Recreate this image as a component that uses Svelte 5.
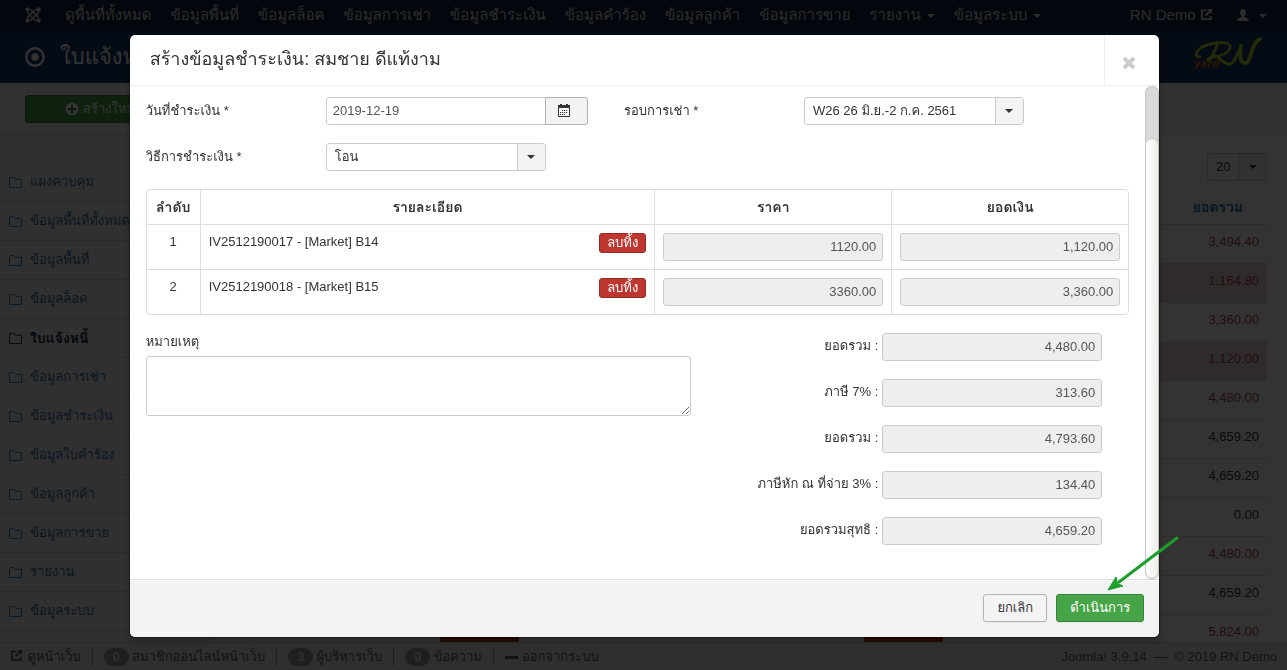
<script lang="ts">
  const navItems = [
    'ดูพื้นที่ทั้งหมด',
    'ข้อมูลพื้นที่',
    'ข้อมูลล็อค',
    'ข้อมูลการเช่า',
    'ข้อมูลชำระเงิน',
    'ข้อมูลคำร้อง',
    'ข้อมูลลูกค้า',
    'ข้อมูลการขาย'
  ];
  const navMenus = ['รายงาน', 'ข้อมูลระบบ'];

  const sideItems = [
    'แผงควบคุม',
    'ข้อมูลพื้นที่ทั้งหมด',
    'ข้อมูลพื้นที่',
    'ข้อมูลล็อค',
    'ใบแจ้งหนี้',
    'ข้อมูลการเช่า',
    'ข้อมูลชำระเงิน',
    'ข้อมูลใบคำร้อง',
    'ข้อมูลลูกค้า',
    'ข้อมูลการขาย',
    'รายงาน',
    'ข้อมูลระบบ'
  ];
  const activeSide = 'ใบแจ้งหนี้';

  const bills = [
    { total: '3,494.40', due: true },
    { total: '1,164.80', due: true, late: true },
    { total: '3,360.00', due: true },
    { total: '1,120.00', due: true, late: true },
    { total: '4,480.00', due: true },
    { total: '4,659.20' },
    { total: '4,659.20' },
    { total: '0.00' },
    { total: '4,480.00', due: true },
    { total: '4,659.20' },
    { total: '5,824.00', due: true }
  ];

  const status = [
    { count: 0, text: 'สมาชิกออนไลน์หน้าเว็บ' },
    { count: 3, text: 'ผู้บริหารเว็บ' },
    { count: 0, text: 'ข้อความ' }
  ];

  const totals = [
    { id: 'subtotal', label: 'ยอดรวม :', value: '4,480.00' },
    { id: 'vat', label: 'ภาษี 7% :', value: '313.60' },
    { id: 'total', label: 'ยอดรวม :', value: '4,793.60' },
    { id: 'withholding', label: 'ภาษีหัก ณ ที่จ่าย 3% :', value: '134.40' },
    { id: 'net', label: 'ยอดรวมสุทธิ :', value: '4,659.20' }
  ];

  let lines = $state([
    { name: 'IV2512190017 - [Market] B14', price: '1120.00', amount: '1,120.00' },
    { name: 'IV2512190018 - [Market] B15', price: '3360.00', amount: '3,360.00' }
  ]);
  let payDate = $state('2019-12-19');
  let note = $state('');
  let open = $state(true);

  function removeLine(index: number) {
    lines.splice(index, 1);
  }
</script>

{#snippet external()}
  <svg class="icon" viewBox="0 0 14 14" aria-hidden="true">
    <path d="M7 2.5H2v9.5h9.500V8.500" fill="none" stroke="currentColor" stroke-width="2" />
    <path d="M7.500 1H13v5.500L11 4.600 6.800 8.900 5.200 7.300 9.500 3z" fill="currentColor" />
  </svg>
{/snippet}

<div class="page">
  <nav class="navbar">
    <a class="brand" href="#home" aria-label="Joomla">
      <svg viewBox="0 0 18 18" aria-hidden="true">
        <g fill="none" stroke="currentColor" stroke-width="1.700">
          <path d="M3 3.500Q2.500 6 4 7.500L11.500 15Q13 16 15 15" />
          <path d="M14.500 3Q12 2.500 10.500 4L3 11.500Q2 13 3 15" />
          <path d="M15 14.500Q15.500 12 14 10.500L6.500 3Q5 2 3 3" />
          <path d="M3.500 15Q6 15.500 7.500 14L15 6.500Q16 5 15 3" />
        </g>
        <g fill="currentColor">
          <circle cx="2.500" cy="2.500" r="2.200" />
          <circle cx="15.500" cy="2.500" r="2.200" />
          <circle cx="2.500" cy="15.500" r="2.200" />
          <circle cx="15.500" cy="15.500" r="2.200" />
        </g>
      </svg>
    </a>
    <div class="nav-list">
      {#each navItems as item}
        <a href="#nav">{item}</a>
      {/each}
      {#each navMenus as item}
        <a href="#nav">{item}<span class="caret"></span></a>
      {/each}
    </div>
    <div class="nav-user">
      <a href="#site">RN Demo {@render external()}</a>
      <a href="#user" aria-label="User">
        <svg class="icon user" viewBox="0 0 12 12" aria-hidden="true">
          <path
            d="M6 0c2 0 3 1.500 3 3.300C9 5 8.200 6.300 7.400 7v1c2.500.500 4.100 1.500 4.600 4H0c.500-2.500 2.100-3.500 4.600-4V7C3.800 6.300 3 5 3 3.300 3 1.500 4 0 6 0z"
            fill="currentColor"
          />
        </svg>
        <span class="caret"></span>
      </a>
    </div>
  </nav>

  <header class="header">
    <svg class="record" viewBox="0 0 20 20" aria-hidden="true">
      <circle cx="10" cy="10" r="8.700" fill="none" stroke="currentColor" stroke-width="2.400" />
      <circle cx="10" cy="10" r="3.700" fill="currentColor" />
    </svg>
    <h1>ใบแจ้งหนี้</h1>
    <svg class="logo" viewBox="0 0 70 40" role="img" aria-label="RN yard">
      <g fill="none" stroke="#a4d42e" stroke-linecap="round" stroke-linejoin="round">
        <path d="M7 20C-1 20 4 9 20 6.500c14-2.500 20 1 16 6.500-3 4-9 6-13 6.500" stroke-width="2.800" />
        <path d="M24 8C22 14 19 20 15 23c4-1 5-5 8-4 4 2 8 9 14 8 5-1 8-13 11-17" stroke-width="3" />
        <path d="M48 9c-1 7-2 17 4 17 7 0 5-20 15-24" stroke-width="3.800" />
      </g>
      <text x="1" y="30" class="logo-text">yard</text>
    </svg>
  </header>

  <div class="subhead">
    <button class="btn success new" type="button">
      <svg viewBox="0 0 14 14" aria-hidden="true">
        <circle cx="7" cy="7" r="6.500" fill="#fff" />
        <path d="M7 3v8M3 7h8" stroke="#378137" stroke-width="2" />
      </svg>
      สร้างใหม่
    </button>
  </div>

  <div class="content">
    <ul class="sidebar">
      {#each sideItems as item}
        <li class:active={item === activeSide}>
          <a href="#side">
            <svg viewBox="0 0 14 12" aria-hidden="true">
              <path d="M.5 11.500V.5h4.500l2 2h6.500v9z" fill="none" stroke="currentColor" />
            </svg>
            {item}
          </a>
        </li>
      {/each}
    </ul>
    <main>
      <div class="select limit">
        <select aria-label="Limit"><option>20</option></select>
        <span class="arrow"><span class="caret"></span></span>
      </div>
      <table class="bills">
        <thead>
          <tr>
            <th class="check"></th>
            <th class="state"></th>
            <th class="state"></th>
            <th>ยอดรวม</th>
          </tr>
        </thead>
        <tbody>
          {#each bills as bill}
            <tr class:late={bill.late} class:due={bill.due}>
              <td class="check"><input type="checkbox" aria-label="Select bill" /></td>
              <td class="state"><span class="tag"></span></td>
              <td class="state"><span class="tag"></span></td>
              <td>{bill.total}</td>
            </tr>
          {/each}
        </tbody>
      </table>
    </main>
  </div>

  <footer class="status">
    <a href="#site">{@render external()} ดูหน้าเว็บ</a>
    {#each status as item}
      <span class="stat"><b class="badge">{item.count}</b>{item.text}</span>
    {/each}
    <a class="stat" href="#logout"><span class="minus"></span>ออกจากระบบ</a>
    <span class="copy">Joomla! 3.9.14 &nbsp;—&nbsp; © 2019 RN Demo</span>
  </footer>
</div>

{#if open}
  <div class="backdrop">
    <div class="modal" role="dialog" aria-modal="true" aria-labelledby="modal-title">
      <div class="modal-header">
        <h3 id="modal-title">สร้างข้อมูลชำระเงิน: สมชาย ดีแท้งาม</h3>
        <button class="close" type="button" aria-label="Close" onclick={() => (open = false)}>
          <svg viewBox="0 0 14 14" aria-hidden="true">
            <path d="M2 2l10 10M12 2L2 12" stroke="currentColor" stroke-width="4" />
          </svg>
        </button>
      </div>

      <div class="modal-scroll">
        <form class="modal-body" id="payment">
          <div class="fields">
            <div class="field">
              <label for="pay-date">วันที่ชำระเงิน *</label>
              <div class="date">
                <input id="pay-date" type="text" bind:value={payDate} />
                <button type="button" aria-label="Calendar">
                  <svg viewBox="0 0 12 13" aria-hidden="true">
                    <path d="M.5 2.500h11v10H.5z" fill="#fff" stroke="#333" />
                    <path d="M0 1h2V0h2v1h4V0h2v1h2v3H0z" fill="#333" />
                    <path
                      d="M4 6.500h6M2 8.500h8M2 10.500h6"
                      stroke="#333"
                      stroke-width="1.200"
                      stroke-dasharray="1.200 .8"
                    />
                  </svg>
                </button>
              </div>
            </div>
            <div class="field">
              <label for="period">รอบการเช่า *</label>
              <div class="select">
                <select id="period"><option>W26 26 มิ.ย.-2 ก.ค. 2561</option></select>
                <span class="arrow"><span class="caret"></span></span>
              </div>
            </div>
            <div class="field">
              <label for="method">วิธีการชำระเงิน *</label>
              <div class="select">
                <select id="method"><option>โอน</option></select>
                <span class="arrow"><span class="caret"></span></span>
              </div>
            </div>
          </div>

          <table class="lines">
            <thead>
              <tr>
                <th class="no">ลำดับ</th>
                <th>รายละเอียด</th>
                <th class="money">ราคา</th>
                <th class="money">ยอดเงิน</th>
              </tr>
            </thead>
            <tbody>
              {#each lines as line, i}
                <tr>
                  <td class="no">{i + 1}</td>
                  <td>
                    <div class="detail">
                      {line.name}
                      <button class="remove" type="button" onclick={() => removeLine(i)}>ลบทิ้ง</button>
                    </div>
                  </td>
                  <td><input class="amount" readonly aria-label="ราคา" value={line.price} /></td>
                  <td><input class="amount" readonly aria-label="ยอดเงิน" value={line.amount} /></td>
                </tr>
              {/each}
            </tbody>
          </table>

          <div class="summary">
            <div class="note">
              <label for="note">หมายเหตุ</label>
              <textarea id="note" bind:value={note}></textarea>
            </div>
            <div class="totals">
              {#each totals as row}
                <div class="total">
                  <label for={row.id}>{row.label}</label>
                  <input id={row.id} class="amount" readonly value={row.value} />
                </div>
              {/each}
            </div>
          </div>
        </form>
        <div class="track" aria-hidden="true"><div class="thumb"></div></div>
      </div>

      <div class="modal-footer">
        <button class="btn" type="button" onclick={() => (open = false)}>ยกเลิก</button>
        <button class="btn success" type="submit" form="payment">ดำเนินการ</button>
        <svg class="pointer" viewBox="0 0 72 56" aria-hidden="true">
          <path d="M70 2L12 46" stroke="#1c9e2c" stroke-width="3" stroke-linecap="round" />
          <path d="M1 54L9 41l1.500 6.500L16 50z" fill="#1c9e2c" stroke="#1c9e2c" />
        </svg>
      </div>
    </div>
  </div>
{/if}

<style>
  :global(body) {
    background: #fff;
    color: #333;
    font: 13px/18px 'Liberation Sans', Loma, sans-serif;
  }

  :global(*) {
    box-sizing: border-box;
  }

  a {
    color: inherit;
    text-decoration: none;
  }

  button,
  input,
  select,
  textarea {
    font: inherit;
    color: inherit;
    margin: 0;
  }

  button {
    cursor: pointer;
  }

  .page {
    display: flex;
    flex-direction: column;
    height: 100vh;
    overflow: hidden;
  }

  .icon {
    width: 13px;
    height: 13px;
    vertical-align: -1px;
  }

  .caret {
    display: inline-block;
    border: 4px solid transparent;
    border-top-color: currentColor;
    border-bottom: 0;
  }

  .navbar {
    display: flex;
    align-items: center;
    flex: none;
    height: 31px;
    padding: 0 20px 0 25px;
    background: #10223e;
    border-bottom: 1px solid #0b182c;
    color: #d9d9d9;
    font-size: 15px;
    white-space: nowrap;
  }

  .brand svg {
    display: block;
    width: 16px;
    height: 16px;
  }

  .nav-list {
    display: flex;
    gap: 19px;
    margin-left: 24px;
  }

  .nav-list .caret {
    margin-left: 6px;
    vertical-align: middle;
  }

  .nav-user {
    display: flex;
    gap: 24px;
    margin-left: auto;
  }

  .nav-user .caret {
    margin-left: 6px;
    vertical-align: middle;
  }

  .user {
    width: 12px;
    height: 12px;
  }

  .header {
    display: flex;
    align-items: center;
    flex: none;
    height: 52px;
    padding: 0 24px 0 25px;
    background: #1a3867;
    color: #fff;
  }

  .header h1 {
    margin: 0 0 0 15px;
    font-size: 22px;
    font-weight: normal;
    line-height: 36px;
  }

  .record {
    width: 20px;
    height: 20px;
  }

  .logo {
    width: 70px;
    height: 40px;
    margin-left: auto;
  }

  .logo-text {
    fill: #c06020;
    font: bold italic 10px 'DejaVu Sans', sans-serif;
  }

  .subhead {
    flex: none;
    padding: 12px 25px 11px;
    border-bottom: 1px solid #d9d9d9;
    background: #f5f5f5;
  }

  .btn {
    display: inline-flex;
    align-items: center;
    justify-content: center;
    height: 28px;
    padding: 0 12px;
    background: #f3f3f3;
    border: 1px solid #b3b3b3;
    border-radius: 3px;
    box-shadow: 0 1px 2px rgb(0 0 0 / 5%);
  }

  .success {
    background: #46a546;
    border-color: #378137;
    color: #fff;
  }

  .new {
    width: 150px;
    gap: 4px;
  }

  .new svg {
    width: 14px;
    height: 14px;
  }

  .content {
    display: flex;
    flex: 1;
    min-height: 0;
    overflow: hidden;
  }

  .sidebar {
    flex: none;
    width: 212px;
    margin: 0;
    padding: 28px 0 0;
    list-style: none;
    background: #f0f0f0;
    color: #3071a9;
  }

  .sidebar li {
    height: 39px;
    border-bottom: 1px solid #ccc;
  }

  .sidebar a {
    display: flex;
    align-items: center;
    gap: 8px;
    height: 38px;
    padding-left: 9px;
  }

  .sidebar svg {
    width: 13px;
    height: 11px;
  }

  .sidebar .active {
    color: #10223e;
    font-size: 14px;
    font-weight: bold;
  }

  main {
    flex: 1;
    display: flex;
    flex-direction: column;
    align-items: flex-end;
    padding: 18px 20px 0 28px;
  }

  .bills {
    width: 100%;
    margin-top: 8px;
    border-collapse: collapse;
  }

  .bills th,
  .bills td {
    height: 39px;
    padding: 8px;
    border-bottom: 1px solid #ddd;
    vertical-align: top;
    text-align: right;
  }

  .bills th {
    height: 35px;
    padding: 9px 24px 8px 0;
    color: #3071a9;
    font-size: 14px;
  }

  .bills .check {
    width: 40px;
    text-align: left;
  }

  .bills .state {
    width: 424px;
    padding-left: 160px;
    text-align: left;
  }

  .tag {
    display: block;
    width: 79px;
    height: 20px;
    border-radius: 3px;
    background: #bd362f;
  }

  .bills .late {
    background: #ecd8d4;
  }

  .bills .due {
    color: #a94442;
  }

  .status {
    display: flex;
    align-items: center;
    flex: none;
    height: 28px;
    padding: 0 10px;
    background: #ebebeb;
    border-top: 1px solid #d4d4d4;
    color: #626262;
    white-space: nowrap;
  }

  .status .icon {
    margin-right: 1px;
  }

  .stat {
    margin-left: 11px;
    padding-left: 11px;
    border-left: 1px solid #999;
    line-height: 14px;
  }

  .badge {
    display: inline-block;
    margin-right: 3px;
    padding: 2px 9px;
    border-radius: 9px;
    background: #999;
    color: #ebebeb;
  }

  .minus {
    display: inline-block;
    width: 13px;
    height: 3px;
    margin-right: 4px;
    background: #555;
    vertical-align: middle;
  }

  .copy {
    margin-left: auto;
  }

  .backdrop {
    position: fixed;
    inset: 0;
    padding-top: 34px;
    background: rgb(0 0 0 / 80%);
  }

  .modal {
    box-sizing: content-box;
    width: 80%;
    margin-left: 10%;
    border: 1px solid rgb(0 0 0 / 30%);
    border-radius: 6px;
    background: #fff;
    background-clip: padding-box;
    box-shadow: 0 3px 7px rgb(0 0 0 / 30%);
  }

  .modal-header {
    display: flex;
    justify-content: space-between;
    border-bottom: 1px solid #eee;
  }

  .modal-header h3 {
    margin: 0;
    padding: 0 20px 2px;
    font-size: 18px;
    font-weight: normal;
    line-height: 48px;
  }

  .close {
    width: 55px;
    padding: 6px 6px 0 0;
    border: 0;
    border-left: 1px solid #eee;
    background: none;
    color: #ccc;
  }

  .close svg {
    display: block;
    width: 14px;
    height: 14px;
    margin: 0 auto;
  }

  .modal-scroll {
    display: flex;
  }

  .modal-body {
    flex: 1;
    padding: 11px 16px 34px;
  }

  .fields {
    display: grid;
    grid-template-columns: 1fr 1fr;
    row-gap: 18px;
    margin-right: 27px;
  }

  .field {
    display: flex;
  }

  .field label {
    width: 180px;
    padding-top: 5px;
  }

  .date {
    display: flex;
  }

  .date input {
    width: 220px;
    height: 28px;
    padding: 3px 6px 5px;
    border: 1px solid #ccc;
    border-radius: 3px 0 0 3px;
    color: #555;
  }

  .date button {
    width: 43px;
    margin-left: -1px;
    padding: 0 0 2px 12px;
    border: 1px solid #b3b3b3;
    border-radius: 0 3px 3px 0;
    background: #f3f3f3;
  }

  .date svg {
    display: block;
    width: 12px;
    height: 13px;
  }

  .select {
    position: relative;
    width: 220px;
    height: 28px;
  }

  .select select {
    width: 100%;
    height: 28px;
    padding: 0 24px 0 8px;
    border: 1px solid #ccc;
    border-radius: 3px;
    background: #fff;
    appearance: none;
  }

  .arrow {
    position: absolute;
    top: 1px;
    right: 1px;
    bottom: 1px;
    display: flex;
    align-items: center;
    justify-content: center;
    width: 28px;
    border-left: 1px solid #ccc;
    border-radius: 0 2px 2px 0;
    background: #f3f3f3;
    pointer-events: none;
  }

  .limit {
    width: 60px;
  }

  .limit select {
    padding-right: 0;
  }

  .lines {
    width: 100%;
    margin-top: 18px;
    border: 1px solid #ddd;
    border-radius: 4px;
    border-collapse: separate;
    border-spacing: 0;
  }

  .lines th,
  .lines td {
    padding: 8px;
    border-left: 1px solid #ddd;
    vertical-align: top;
  }

  .lines th {
    font-size: 14px;
  }

  .lines td {
    border-top: 1px solid #ddd;
  }

  .lines .no {
    width: 53px;
    padding: 8px 0;
    border-left: 0;
    text-align: center;
  }

  .lines .money {
    width: 237px;
  }

  .detail {
    display: flex;
    align-items: flex-start;
    justify-content: space-between;
  }

  .remove {
    height: 20px;
    padding: 0 7px;
    border: 1px solid #942a25;
    border-radius: 3px;
    background: #bd362f;
    color: #fff;
    line-height: 16px;
  }

  .amount {
    display: block;
    width: 220px;
    height: 28px;
    padding: 3px 6px 5px;
    border: 1px solid #ccc;
    border-radius: 3px;
    background: #eee;
    color: #555;
    text-align: right;
  }

  .summary {
    display: flex;
    margin: 18px 27px 0 0;
  }

  .note {
    width: 57%;
  }

  .note label {
    display: block;
  }

  .note textarea {
    display: block;
    width: 100%;
    height: 60px;
    margin-top: 5px;
    border: 1px solid #ccc;
    border-radius: 3px;
  }

  .totals {
    display: flex;
    flex: 1;
    flex-direction: column;
    gap: 18px;
  }

  .total {
    display: flex;
    justify-content: flex-end;
    gap: 4px;
  }

  .total label {
    padding-top: 4px;
  }

  .track {
    width: 14px;
    padding-top: 52px;
    border-radius: 7px;
    background: #d9d9d9;
    box-shadow: inset 0 0 0 1px #c4c4c4;
  }

  .thumb {
    height: 100%;
    border: 1px solid #c8c6c2;
    border-radius: 7px;
    background: linear-gradient(to right, #fff, #ededeb);
  }

  .modal-footer {
    position: relative;
    display: flex;
    justify-content: flex-end;
    gap: 9px;
    padding: 14px 15px 15px;
    border-top: 1px solid #ddd;
    border-radius: 0 0 6px 6px;
    background: #f3f3f3;
    box-shadow: inset 0 1px 0 #fff;
  }

  .modal-footer .btn {
    padding: 0 13px;
  }

  .pointer {
    position: absolute;
    right: -20px;
    bottom: 45px;
    width: 72px;
    height: 56px;
  }
</style>
